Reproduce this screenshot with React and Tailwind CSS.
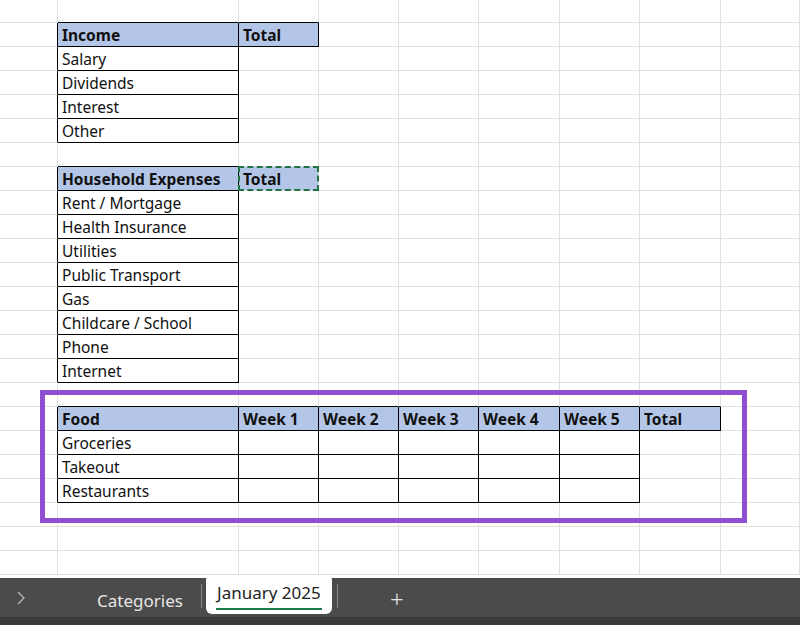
import React from "react";

const widths = [58, 181, 80, 80, 80, 81, 80, 81, 79];
const ROWS = 24;
const cells = {};
const put = (r, c, text, head) => (cells[r + "," + c] = { text, head });
put(1, 1, "Income", true); put(1, 2, "Total", true);
["Salary", "Dividends", "Interest", "Other"].forEach((t, i) => put(2 + i, 1, t));
put(7, 1, "Household Expenses", true); put(7, 2, "Total", "dash");
["Rent / Mortgage", "Health Insurance", "Utilities", "Public Transport", "Gas", "Childcare / School", "Phone", "Internet"].forEach((t, i) => put(8 + i, 1, t));
["Food", "Week 1", "Week 2", "Week 3", "Week 4", "Week 5", "Total"].forEach((t, i) => put(17, 1 + i, t, true));
["Groceries", "Takeout", "Restaurants"].forEach((t, i) => {
  put(18 + i, 1, t);
  for (let c = 2; c <= 6; c++) put(18 + i, c, "");
});
const inT = (r, c) => {
  const x = cells[r + "," + c];
  return x && x.head !== "dash";
};

export default function App() {
  const rows = [];
  for (let r = 0; r < ROWS; r++) {
    const cs = [];
    for (let c = 0; c < widths.length; c++) {
      const cell = cells[r + "," + c];
      const rb = inT(r, c) || inT(r, c + 1);
      const bb = inT(r, c) || inT(r + 1, c);
      const dash = cell && cell.head === "dash";
      cs.push(
        <div
          key={c}
          style={{ width: widths[c] }}
          className={
            "relative shrink-0 h-full border-r border-b " +
            (rb ? "border-r-black " : "border-r-[#e1e1e1] ") +
            (bb ? "border-b-black " : "border-b-[#e1e1e1] ") +
            (cell && cell.head ? "bg-[#b4c6e7] font-bold " : "")
          }
        >
          {dash && (
            <div className="absolute -left-px -top-px right-[-1px] bottom-[-1px] border-2 border-dashed border-[#217346]" />
          )}
          {cell && (
            <span className="absolute left-[4px] bottom-[1px] text-[15.5px] leading-[20px] text-[#111] whitespace-nowrap">
              {cell.text}
            </span>
          )}
        </div>
      );
    }
    rows.push(
      <div key={r} className={"flex " + (r === 0 ? "h-[23px]" : "h-[24px]")}>
        {cs}
      </div>
    );
  }
  return (
    <div className="relative w-[800px] h-[625px] overflow-hidden bg-white" style={{ fontFamily: "'Noto Sans', 'Open Sans', sans-serif" }}>
      <div className="flex flex-col">{rows}</div>
      <div className="absolute left-[40px] top-[390px] w-[707px] h-[133px] border-[5px] border-[#8e4fd0]" />
      <div className="absolute left-0 top-[578px] w-full h-[47px] bg-[#4b4b4b] flex flex-col">
        <div className="flex items-start h-[39px] relative">
          <svg className="ml-[17px] mt-[13px]" width="8" height="14" viewBox="0 0 8 14">
            <path d="M1 1 L7 7 L1 13" fill="none" stroke="#b8b8b8" strokeWidth="1.3" />
          </svg>
          <span className="ml-[72px] mt-[10px] text-[#e6e6e6] text-[17px]">Categories</span>
          <div className="ml-[18px] mt-[6px] w-px h-[24px] bg-[#888]" />
          <div className="ml-[4px] -mt-[1px] w-[126px] h-[37px] bg-white rounded-b-[6px] rounded-t-[3px] flex flex-col items-center pt-[4px]">
            <span className="text-[17px] leading-[24px] text-[#222]">January 2025</span>
            <div className="w-[106px] h-[2px] bg-[#1e7a44] mt-[3px]" />
          </div>
          <div className="ml-[5px] mt-[6px] w-px h-[24px] bg-[#888]" />
          <span className="ml-[52px] mt-[3px] text-[#e6e6e6] text-[24px] font-light">+</span>
        </div>
        <div className="flex-1 bg-[#3a3a3a]" />
      </div>
    </div>
  );
}
